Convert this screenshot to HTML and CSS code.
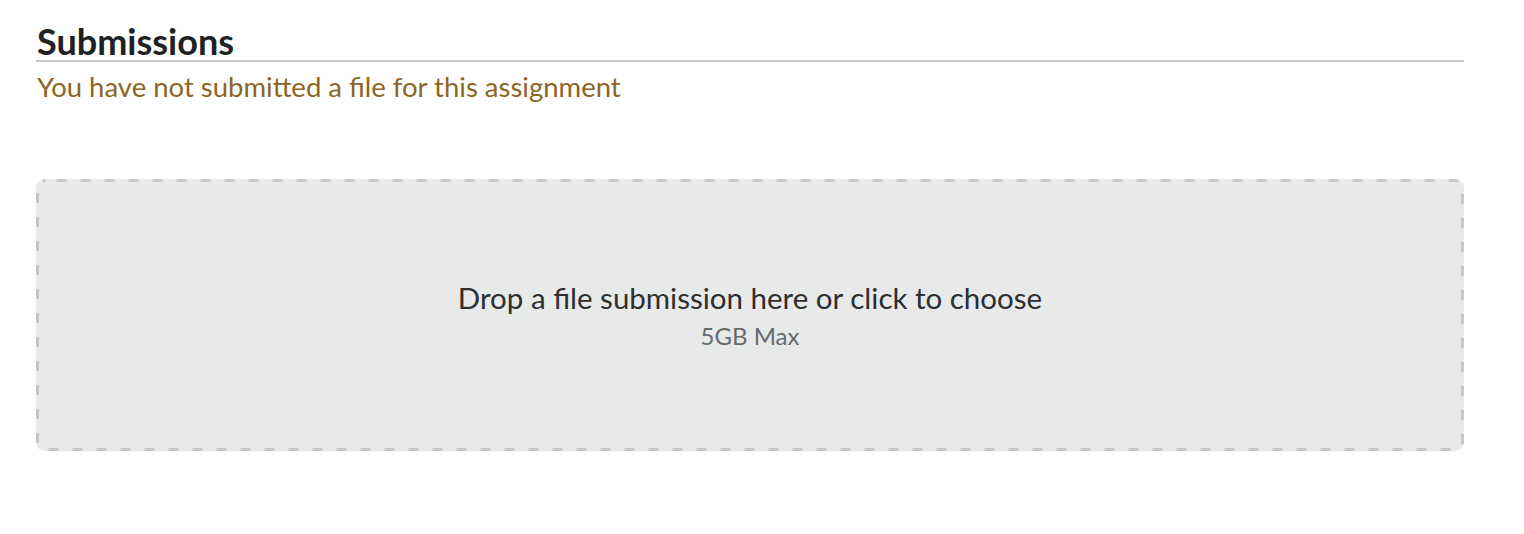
FILE: index.html
```html
<!DOCTYPE html>
<html lang="en">
<head>
<meta charset="utf-8">
<link rel="stylesheet" href="styles.css">
</head>
<body>
<main class="page">
  <h2 class="title">Submissions</h2>
  <p class="status">You have not submitted a file for this assignment</p>
  <div class="dropzone">
    <svg class="dropzone-border" width="1428" height="272" aria-hidden="true">
      <rect x="1.5" y="1.5" width="1425" height="269" rx="8" ry="8" fill="none" stroke="#c7c7c7" stroke-width="3" stroke-dasharray="10 14" stroke-dashoffset="13"/>
    </svg>
    <div class="drop-main">Drop a file submission here or click to choose</div>
    <div class="drop-sub">5GB Max</div>
  </div>
</main>
</body>
</html>
```
FILE: styles.css
```css
html, body {
  margin: 0;
  padding: 0;
  background: #fff;
}
body {
  font-family: Lato, "Noto Sans", sans-serif;
}
.page {
  width: 1428px;
  padding: 23px 0 0 36px;
}
.title {
  margin: 0;
  font-size: 36px;
  font-weight: 700;
  color: #202122;
  line-height: 37px;
  padding-left: 1px;
  border-bottom: 2px solid #c7c7c7;
}
.status {
  margin: 8px 0 0 1px;
  font-size: 27.5px;
  line-height: 33px;
  color: #8d6524;
}
.dropzone {
  position: relative;
  box-sizing: border-box;
  margin-top: 76px;
  height: 272px;
  padding-bottom: 2px;
  border-radius: 9px;
  background: #e8e9e9;
  display: flex;
  flex-direction: column;
  align-items: center;
  justify-content: center;
}
.dropzone-border {
  position: absolute;
  left: 0;
  top: 0;
  pointer-events: none;
}
.drop-main {
  font-size: 29.5px;
  line-height: 40px;
  color: #2d2f31;
}
.drop-sub {
  margin-top: 3px;
  font-size: 24px;
  line-height: 30px;
  color: #666a6d;
}
```
